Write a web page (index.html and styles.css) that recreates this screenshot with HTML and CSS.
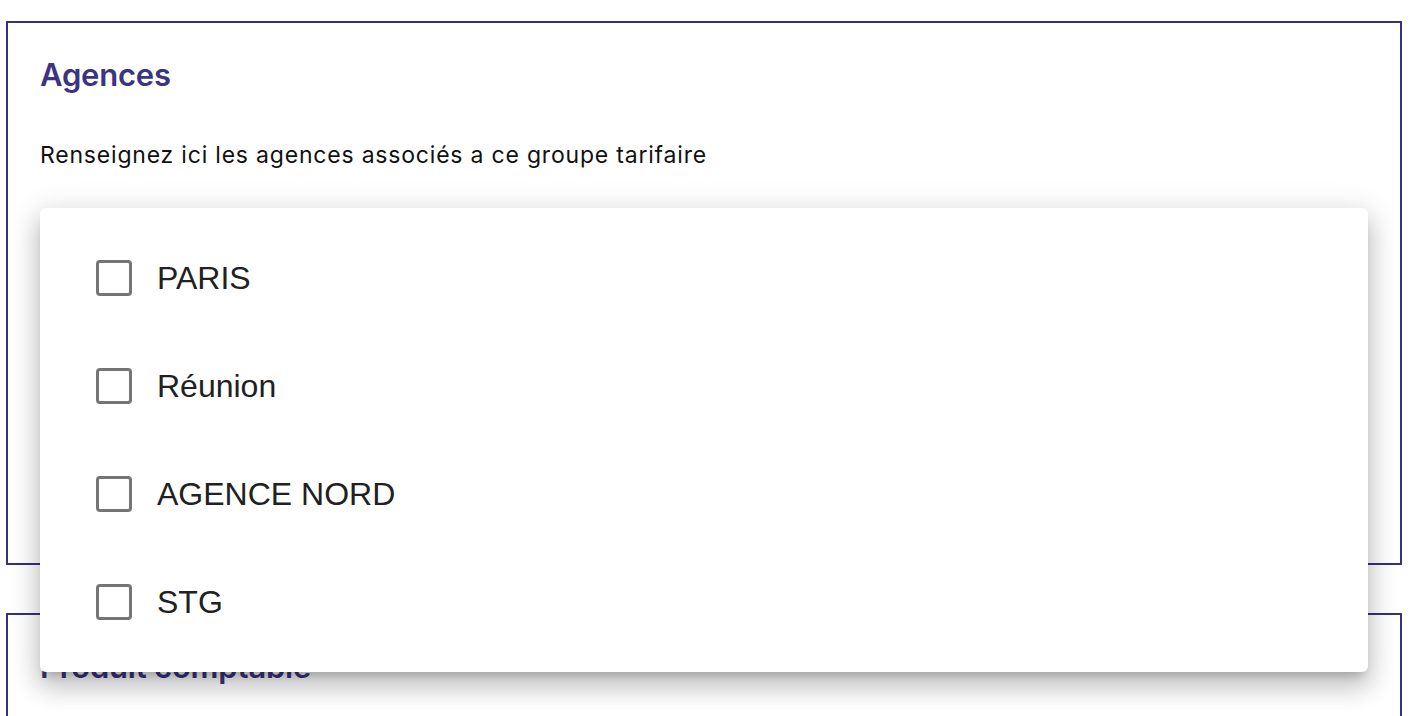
FILE: index.html
```html
<!DOCTYPE html>
<html lang="fr">
<head>
<meta charset="utf-8">
<title>Groupe tarifaire</title>
<link rel="stylesheet" href="styles.css">
</head>
<body>
<main class="page">
  <section class="card card-agences">
    <h2 class="card-title">Agences</h2>
    <p class="card-desc">Renseignez ici les agences associés a ce groupe tarifaire</p>
    <div class="field">
      <div class="panel">
        <label class="option"><span class="box"></span><span class="option-label">PARIS</span></label>
        <label class="option"><span class="box"></span><span class="option-label">Réunion</span></label>
        <label class="option"><span class="box"></span><span class="option-label">AGENCE NORD</span></label>
        <label class="option"><span class="box"></span><span class="option-label">STG</span></label>
      </div>
    </div>
  </section>
  <section class="card card-produit">
    <h2 class="card-title">Produit comptable</h2>
  </section>
</main>
</body>
</html>
```

FILE: styles.css
```css
html, body {
  margin: 0;
  padding: 0;
  background: #ffffff;
  overflow: hidden;
}

body {
  font-family: "Inter", "Lato", sans-serif;
  width: 1418px;
  height: 716px;
}

.page {
  display: flex;
  flex-direction: column;
  gap: 48px;
  padding: 21px 16px 0 6px;
}

.card {
  border: 2px solid #35307f;
  padding: 32px 32px 0 32px;
  box-sizing: border-box;
  display: flex;
  flex-direction: column;
}

.card-agences {
  height: 544px;
}

.card-produit {
  height: 300px;
}

.card-title {
  margin: 0;
  font-size: 31px;
  line-height: 40px;
  font-weight: 600;
  color: #3a3482;
  letter-spacing: -0.2px;
}

.card-desc {
  margin: 46px 0 0 0;
  font-size: 23px;
  line-height: 28px;
  letter-spacing: 0.8px;
  color: #111111;
}

.field {
  position: relative;
  flex: 1;
}

.panel {
  position: absolute;
  top: 39px;
  left: 0;
  right: 0;
  background: #ffffff;
  border-radius: 6px;
  padding: 16px 0;
  z-index: 5;
  display: flex;
  flex-direction: column;
  box-shadow: 0 8px 10px -5px rgba(0,0,0,0.2), 0 16px 24px 2px rgba(0,0,0,0.14), 0 6px 30px 5px rgba(0,0,0,0.12);
}

.option {
  height: 108px;
  display: flex;
  align-items: center;
  padding-left: 56px;
  gap: 25px;
  font-family: "Liberation Sans", Arial, sans-serif;
  font-size: 32px;
  color: #212121;
}

.box {
  width: 36px;
  height: 36px;
  box-sizing: border-box;
  border: 3px solid #757575;
  border-radius: 4px;
  flex: none;
}
```
